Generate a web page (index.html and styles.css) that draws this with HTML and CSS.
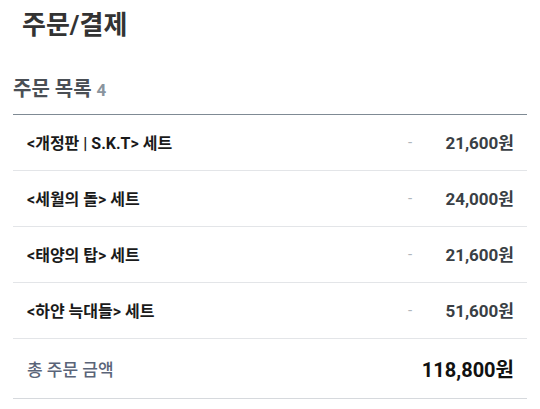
FILE: index.html
```html
<!DOCTYPE html>
<html lang="ko">
<head>
<meta charset="utf-8">
<link rel="stylesheet" href="styles.css">
</head>
<body>
<div class="page">
  <h1 class="title">주문/결제</h1>
  <h2 class="section">주문 목록 <span class="count">4</span></h2>
  <ul class="list">
    <li class="row"><span class="name">&lt;개정판 | S.K.T&gt; 세트</span><span class="dash">-</span><span class="price">21,600원</span></li>
    <li class="row"><span class="name">&lt;세월의 돌&gt; 세트</span><span class="dash">-</span><span class="price">24,000원</span></li>
    <li class="row"><span class="name">&lt;태양의 탑&gt; 세트</span><span class="dash">-</span><span class="price">21,600원</span></li>
    <li class="row"><span class="name">&lt;하얀 늑대들&gt; 세트</span><span class="dash">-</span><span class="price">51,600원</span></li>
  </ul>
  <div class="total"><span class="total-label">총 주문 금액</span><span class="total-price">118,800원</span></div>
</div>
</body>
</html>
```
FILE: styles.css
```css
* { box-sizing: border-box; }
body {
  margin: 0;
  background: #fff;
  font-family: Roboto, "Noto Sans CJK KR", sans-serif;
  color: #222;
}
.page {
  padding: 0 13px 0 13px;
  width: 540px;
}
.title {
  margin: 0;
  padding: 7px 0 0 9px;
  font-size: 26px;
  line-height: 36px;
  font-weight: 700;
  color: #333;
}
.section {
  margin: 33px 0 0 0;
  font-size: 20px;
  line-height: 26px;
  height: 39px;
  font-weight: 700;
  color: #4a4f55;
  border-bottom: 1px solid #7f8a94;
}
.count {
  font-size: 17px;
  color: #8a949e;
}
.list {
  list-style: none;
  margin: 0;
  padding: 0;
}
.row {
  display: flex;
  align-items: center;
  height: 56px;
  padding: 0 13px 2px 14px;
  border-bottom: 1px solid #e3e5e8;
}
.name {
  flex: 1;
  font-size: 16px;
  font-weight: 700;
  color: #1a1a1a;
}
.dash {
  color: #b0b6bc;
  font-size: 15px;
  width: 30px;
}
.price {
  width: 76px;
  text-align: right;
  font-size: 17px;
  font-weight: 700;
  color: #3a3f45;
}
.total {
  display: flex;
  align-items: center;
  justify-content: space-between;
  height: 60px;
  padding: 0 13px 0 14px;
  border-bottom: 1px solid #d6d9dd;
}
.total-label {
  font-size: 17px;
  font-weight: 500;
  color: #5a6478;
}
.total-price {
  font-size: 20px;
  font-weight: 700;
  color: #111;
}
```
